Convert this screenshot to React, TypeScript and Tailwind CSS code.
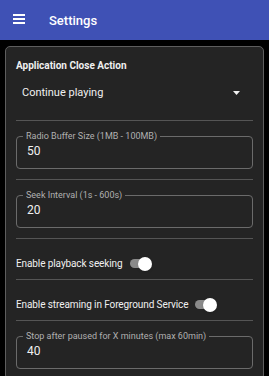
const Divider = () => <div className="h-px bg-[#555555]" />;

const Field = ({ label, value }: { label: string; value: string }) => (
  <div className="pt-[10px] pb-[10px]">
    <fieldset className="h-[38px] rounded-[4px] border border-[#6b6b6b] px-[10px]">
      <legend className="ml-[-4px] px-[3px] text-[9px] leading-[10px] text-[#b0b0b0]">{label}</legend>
      <div className="mt-[2px] text-[12px] leading-[16px] text-[#f0f0f0]">{value}</div>
    </fieldset>
  </div>
);

const Toggle = ({ label }: { label: string }) => (
  <div className="flex h-[40px] items-center pt-[9px]">
    <span className="text-[10px] tracking-[-0.1px] text-[#f0f0f0]">{label}</span>
    <div className="relative ml-[7px] h-[9px] w-[20px] rounded-full bg-[#8a8a8a]">
      <div className="absolute right-[-2px] top-1/2 h-[14px] w-[14px] -translate-y-1/2 rounded-full bg-white shadow" />
    </div>
  </div>
);

export default function App() {
  return (
    <div className="min-h-screen bg-black font-['Roboto',sans-serif]">
      <header className="flex h-[40px] items-center bg-[#3f51b5] pl-[13px]">
        <svg width="12" height="10" viewBox="0 0 12 10" className="mt-[-2px] text-white">
          <rect y="0" width="12" height="2" fill="currentColor" />
          <rect y="4" width="12" height="2" fill="currentColor" />
          <rect y="8" width="12" height="2" fill="currentColor" />
        </svg>
        <h1 className="ml-[24px] mt-[2px] text-[13px] font-medium text-white">Settings</h1>
      </header>

      <div className="px-[5px] pt-[6px]">
        <div className="rounded-[5px] border border-[#5e5e5e] bg-[#242424] px-[10px]">
          <div className="h-[73px] pt-[11px]">
            <div className="text-[10px] font-bold text-[#f0f0f0]">Application Close Action</div>
            <div className="mt-[12px] flex items-center pl-[6px] pr-[13px]">
              <span className="flex-1 text-[11px] text-[#f0f0f0]">Continue playing</span>
              <svg width="7" height="4" viewBox="0 0 7 4">
                <path d="M0 0h7L3.5 4z" fill="#f0f0f0" />
              </svg>
            </div>
          </div>
          <Divider />
          <Field label="Radio Buffer Size (1MB - 100MB)" value="50" />
          <Divider />
          <Field label="Seek Interval (1s - 600s)" value="20" />
          <Divider />
          <Toggle label="Enable playback seeking" />
          <Divider />
          <Toggle label="Enable streaming in Foreground Service" />
          <Divider />
          <Field label="Stop after paused for X minutes (max 60min)" value="40" />
        </div>
      </div>
    </div>
  );
}
